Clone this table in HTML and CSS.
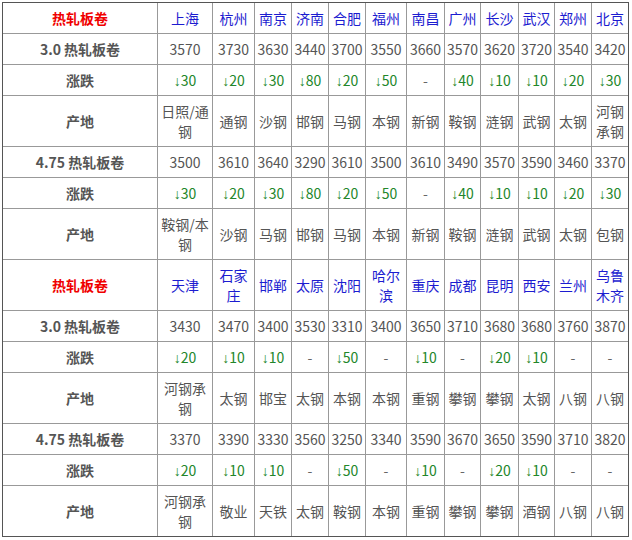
FILE: index.html
```html
<!DOCTYPE html>
<html lang="zh-CN">
<head>
<meta charset="utf-8">
<title>热轧板卷</title>
<link rel="stylesheet" href="styles.css">
</head>
<body>
<table class="t">
<colgroup>
<col class="c0"><col class="c1"><col class="c2"><col class="c3"><col class="c4"><col class="c5"><col class="c6"><col class="c7"><col class="c8"><col class="c9"><col class="c10"><col class="c11"><col class="c12">
</colgroup>
<tbody>
<tr><td class="hd">热轧板卷</td><td class="city">上海</td><td class="city">杭州</td><td class="city">南京</td><td class="city">济南</td><td class="city">合肥</td><td class="city">福州</td><td class="city">南昌</td><td class="city">广州</td><td class="city">长沙</td><td class="city">武汉</td><td class="city">郑州</td><td class="city">北京</td></tr>
<tr><td class="lbl">3.0 热轧板卷</td><td class="n">3570</td><td class="n">3730</td><td class="n">3630</td><td class="n">3440</td><td class="n">3700</td><td class="n">3550</td><td class="n">3660</td><td class="n">3570</td><td class="n">3620</td><td class="n">3720</td><td class="n">3540</td><td class="n">3420</td></tr>
<tr><td class="lbl">涨跌</td><td class="dn"><span class="ar">↓</span>30</td><td class="dn"><span class="ar">↓</span>20</td><td class="dn"><span class="ar">↓</span>30</td><td class="dn"><span class="ar">↓</span>80</td><td class="dn"><span class="ar">↓</span>20</td><td class="dn"><span class="ar">↓</span>50</td><td class="nc">-</td><td class="dn"><span class="ar">↓</span>40</td><td class="dn"><span class="ar">↓</span>10</td><td class="dn"><span class="ar">↓</span>10</td><td class="dn"><span class="ar">↓</span>20</td><td class="dn"><span class="ar">↓</span>30</td></tr>
<tr><td class="lbl">产地</td><td class="o">日照/通钢</td><td class="o">通钢</td><td class="o">沙钢</td><td class="o">邯钢</td><td class="o">马钢</td><td class="o">本钢</td><td class="o">新钢</td><td class="o">鞍钢</td><td class="o">涟钢</td><td class="o">武钢</td><td class="o">太钢</td><td class="o">河钢承钢</td></tr>
<tr><td class="lbl">4.75 热轧板卷</td><td class="n">3500</td><td class="n">3610</td><td class="n">3640</td><td class="n">3290</td><td class="n">3610</td><td class="n">3500</td><td class="n">3610</td><td class="n">3490</td><td class="n">3570</td><td class="n">3590</td><td class="n">3460</td><td class="n">3370</td></tr>
<tr><td class="lbl">涨跌</td><td class="dn"><span class="ar">↓</span>30</td><td class="dn"><span class="ar">↓</span>20</td><td class="dn"><span class="ar">↓</span>30</td><td class="dn"><span class="ar">↓</span>80</td><td class="dn"><span class="ar">↓</span>20</td><td class="dn"><span class="ar">↓</span>50</td><td class="nc">-</td><td class="dn"><span class="ar">↓</span>40</td><td class="dn"><span class="ar">↓</span>10</td><td class="dn"><span class="ar">↓</span>10</td><td class="dn"><span class="ar">↓</span>20</td><td class="dn"><span class="ar">↓</span>30</td></tr>
<tr><td class="lbl">产地</td><td class="o">鞍钢/本钢</td><td class="o">沙钢</td><td class="o">马钢</td><td class="o">邯钢</td><td class="o">马钢</td><td class="o">本钢</td><td class="o">新钢</td><td class="o">鞍钢</td><td class="o">涟钢</td><td class="o">武钢</td><td class="o">太钢</td><td class="o">包钢</td></tr>
<tr><td class="hd">热轧板卷</td><td class="city">天津</td><td class="city">石家庄</td><td class="city">邯郸</td><td class="city">太原</td><td class="city">沈阳</td><td class="city">哈尔滨</td><td class="city">重庆</td><td class="city">成都</td><td class="city">昆明</td><td class="city">西安</td><td class="city">兰州</td><td class="city">乌鲁木齐</td></tr>
<tr><td class="lbl">3.0 热轧板卷</td><td class="n">3430</td><td class="n">3470</td><td class="n">3400</td><td class="n">3530</td><td class="n">3310</td><td class="n">3400</td><td class="n">3650</td><td class="n">3710</td><td class="n">3680</td><td class="n">3680</td><td class="n">3760</td><td class="n">3870</td></tr>
<tr><td class="lbl">涨跌</td><td class="dn"><span class="ar">↓</span>20</td><td class="dn"><span class="ar">↓</span>10</td><td class="dn"><span class="ar">↓</span>10</td><td class="nc">-</td><td class="dn"><span class="ar">↓</span>50</td><td class="nc">-</td><td class="dn"><span class="ar">↓</span>10</td><td class="nc">-</td><td class="dn"><span class="ar">↓</span>20</td><td class="dn"><span class="ar">↓</span>10</td><td class="nc">-</td><td class="nc">-</td></tr>
<tr><td class="lbl">产地</td><td class="o">河钢承钢</td><td class="o">太钢</td><td class="o">邯宝</td><td class="o">太钢</td><td class="o">本钢</td><td class="o">本钢</td><td class="o">重钢</td><td class="o">攀钢</td><td class="o">攀钢</td><td class="o">太钢</td><td class="o">八钢</td><td class="o">八钢</td></tr>
<tr><td class="lbl">4.75 热轧板卷</td><td class="n">3370</td><td class="n">3390</td><td class="n">3330</td><td class="n">3560</td><td class="n">3250</td><td class="n">3340</td><td class="n">3590</td><td class="n">3670</td><td class="n">3650</td><td class="n">3590</td><td class="n">3710</td><td class="n">3820</td></tr>
<tr><td class="lbl">涨跌</td><td class="dn"><span class="ar">↓</span>20</td><td class="dn"><span class="ar">↓</span>10</td><td class="dn"><span class="ar">↓</span>10</td><td class="nc">-</td><td class="dn"><span class="ar">↓</span>50</td><td class="nc">-</td><td class="dn"><span class="ar">↓</span>10</td><td class="nc">-</td><td class="dn"><span class="ar">↓</span>20</td><td class="dn"><span class="ar">↓</span>10</td><td class="nc">-</td><td class="nc">-</td></tr>
<tr><td class="lbl">产地</td><td class="o">河钢承钢</td><td class="o">敬业</td><td class="o">天铁</td><td class="o">太钢</td><td class="o">鞍钢</td><td class="o">本钢</td><td class="o">重钢</td><td class="o">攀钢</td><td class="o">攀钢</td><td class="o">酒钢</td><td class="o">八钢</td><td class="o">八钢</td></tr>
</tbody>
</table>
</body>
</html>
```

FILE: styles.css
```css
html, body {
  margin: 0;
  padding: 0;
  background: #ffffff;
}

.t {
  margin: 2px;
  table-layout: fixed;
  width: 627px;
  border: 1px solid #555555;
  border-spacing: 0;
  font-family: "Noto Sans CJK SC", "Noto Sans", sans-serif;
  font-size: 14px;
  line-height: 20px;
  color: #555555;
}

.t td {
  box-sizing: border-box;
  padding: 5px 2px;
  text-align: center;
  vertical-align: middle;
  border-right: 1px solid #999999;
  border-bottom: 1px solid #999999;
  word-break: break-all;
}

.t td:last-child { border-right: none; }
.t tr:last-child td { border-bottom: none; }

.t tr { height: 31px; }

.c0 { width: 155px; }
.c1 { width: 55px; }
.c2 { width: 42px; }
.c3 { width: 37px; }
.c4 { width: 37px; }
.c5 { width: 37px; }
.c6 { width: 41px; }
.c7 { width: 38px; }
.c8 { width: 36px; }
.c9 { width: 38px; }
.c10 { width: 36px; }
.c11 { width: 37px; }
.c12 { width: 36px; }

.hd {
  color: #f00000;
  font-weight: bold;
}

.city { color: #1c1cd0; }

.lbl {
  font-weight: bold;
  color: #555555;
}

.n { white-space: nowrap; color: #555555; }

.dn { white-space: nowrap; color: #22862a; }

.ar {
  font-family: "Liberation Sans", "DejaVu Sans", sans-serif;
  line-height: 1;
}

.nc { color: #666666; }

.o { color: #555555; }
```
